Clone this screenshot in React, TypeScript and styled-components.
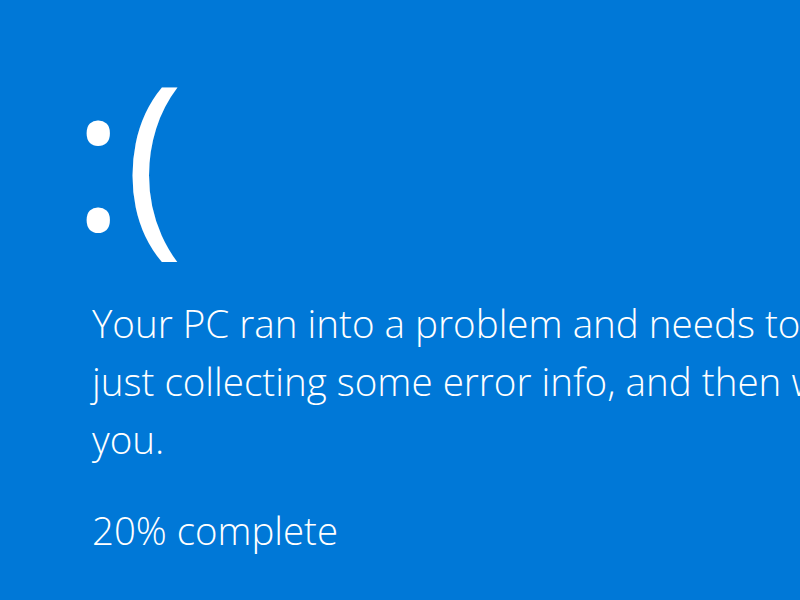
import React from 'react';
import styled, { createGlobalStyle } from 'styled-components';

const GlobalStyle = createGlobalStyle`
  html, body {
    margin: 0;
    padding: 0;
    width: 100%;
    height: 100%;
    overflow: hidden;
    background: #0078d7;
  }
  body {
    font-family: "Open Sans", "Noto Sans", "Liberation Sans", sans-serif;
    color: #ffffff;
  }
`;

const Screen = styled.div`
  width: 800px;
  height: 600px;
  overflow: hidden;
  background: #0078d7;
  padding: 0 0 0 92px;
  box-sizing: border-box;
  display: flex;
  flex-direction: column;
`;

const Face = styled.div`
  font-size: 200px;
  font-weight: 400;
  line-height: 1;
  margin: 53px 0 0 -20px;
  height: 219px;
`;

const Message = styled.p`
  margin: 22px 0 0;
  font-size: 38.6px;
  font-weight: 300;
  line-height: 58px;
  white-space: nowrap;
`;

const Progress = styled.p`
  margin: 38px 0 0;
  font-size: 38.4px;
  font-weight: 300;
  line-height: 48px;
  white-space: nowrap;
`;

export default function App() {
  return (
    <>
      <GlobalStyle />
      <Screen>
        <Face>:(</Face>
        <Message>
          Your PC ran into a problem and needs to restart. We're
          <br />
          just collecting some error info, and then we'll restart for
          <br />
          you.
        </Message>
        <Progress>20% complete</Progress>
      </Screen>
    </>
  );
}
